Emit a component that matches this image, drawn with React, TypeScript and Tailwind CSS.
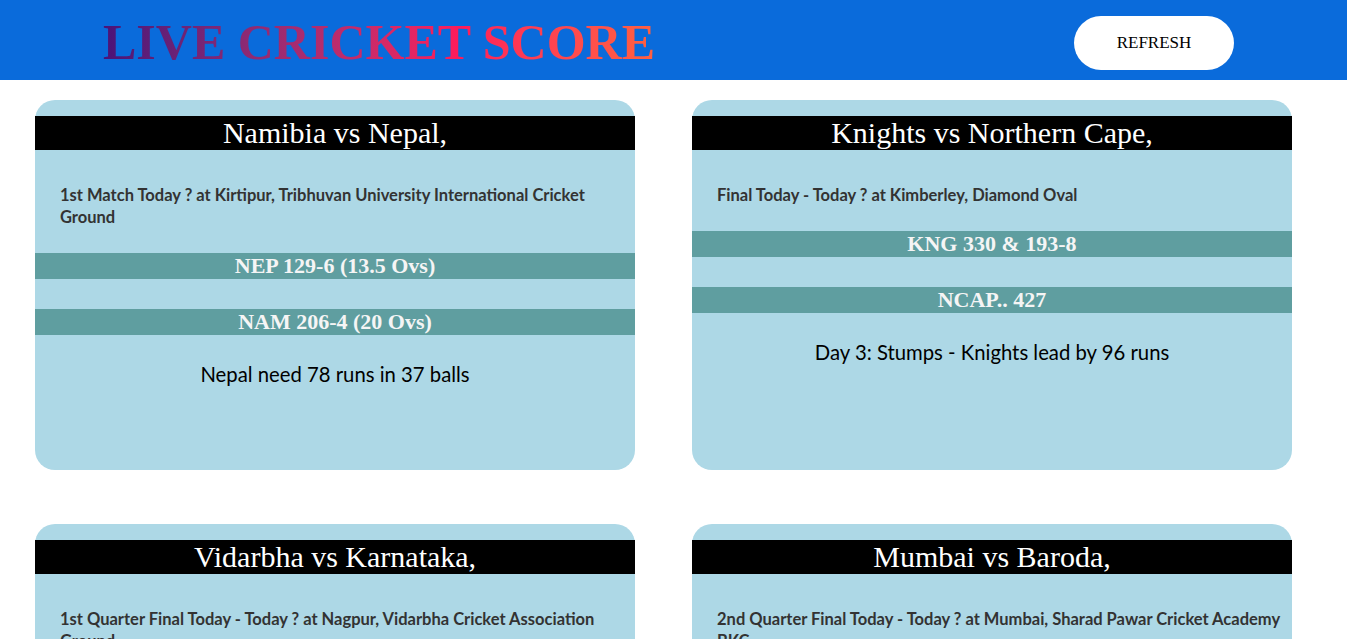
type Match = {
  title: string
  venue: string
  scores: string[]
  status: string
}

const matches: Match[] = [
  {
    title: "Namibia vs Nepal,",
    venue: "1st Match Today ? at Kirtipur, Tribhuvan University International Cricket Ground",
    scores: ["NEP 129-6 (13.5 Ovs)", "NAM 206-4 (20 Ovs)"],
    status: "Nepal need 78 runs in 37 balls",
  },
  {
    title: "Knights vs Northern Cape,",
    venue: "Final Today - Today ? at Kimberley, Diamond Oval",
    scores: ["KNG 330 & 193-8", "NCAP.. 427"],
    status: "Day 3: Stumps - Knights lead by 96 runs",
  },
  {
    title: "Vidarbha vs Karnataka,",
    venue: "1st Quarter Final Today - Today ? at Nagpur, Vidarbha Cricket Association Ground",
    scores: ["VID 460", "KAR 286"],
    status: "Day 3: Stumps",
  },
  {
    title: "Mumbai vs Baroda,",
    venue: "2nd Quarter Final Today - Today ? at Mumbai, Sharad Pawar Cricket Academy BKC",
    scores: ["MUM 384", "BRD 348"],
    status: "Day 3: Stumps",
  },
]

const MatchCard = ({ match }: { match: Match }) => {
  return (
    <div className="w-[600px] h-[370px] bg-[#add8e6] rounded-[20px] pt-4">
      <h2 className="h-[34px] bg-black text-white text-center text-[30px] leading-[34px] font-['Liberation_Serif',serif]">
        {match.title}
      </h2>
      <p className="pl-[25px] mt-[34px] mb-[25px] text-[16.5px] leading-[22px] font-bold text-[#333] font-['Lato',sans-serif]">
        {match.venue}
      </p>
      {match.scores.map((score, i) => (
        <div
          key={i}
          className={`h-[26px] bg-[#5f9ea0] text-center text-[22px] leading-[26px] font-bold text-[#f5f5f5] font-['Liberation_Serif',serif] ${i > 0 ? 'mt-[30px]' : ''}`}
        >
          {score}
        </div>
      ))}
      <p className="mt-[25px] text-center text-[20.3px] leading-[28px] text-black font-['Lato',sans-serif]">
        {match.status}
      </p>
    </div>
  )
}

export default function App() {
  return (
    <div className="min-h-screen bg-white">
      <header className="h-[80px] bg-[#0a6bdb] flex items-center justify-between pl-[103px] pr-[113px]">
        <h1 className="mt-[3px] text-[50px] font-bold leading-none font-['Liberation_Serif',serif] bg-gradient-to-r from-[#4a1278] via-[#ff1a5a] via-65% to-[#ff6040] bg-clip-text text-transparent">
          LIVE CRICKET SCORE
        </h1>
        <button className="mt-[6px] w-[160px] h-[54px] bg-white rounded-full text-[17px] text-black font-['Liberation_Serif',serif]">
          REFRESH
        </button>
      </header>
      <main className="pl-[35px] pt-[20px] flex flex-wrap gap-x-[57px] gap-y-[54px] w-[1347px]">
        {matches.map((m, i) => (
          <MatchCard key={i} match={m} />
        ))}
      </main>
    </div>
  )
}
